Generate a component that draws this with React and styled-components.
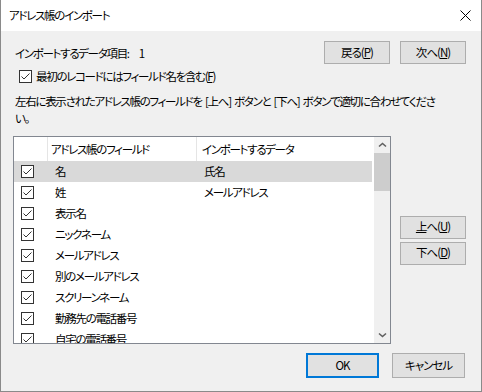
import React from "react";
import styled, { createGlobalStyle } from "styled-components";

const Global = createGlobalStyle`
  html, body { margin: 0; padding: 0; background: #ffffff; }
  body {
    font-family: "Noto Sans CJK JP", "Noto Sans", sans-serif;
    font-size: 11.5px;
    color: #000;
  }
  * { box-sizing: border-box; }
`;

const Window = styled.div`
  width: 482px;
  height: 392px;
  display: flex;
  flex-direction: column;
  border: 1px solid #8a8a8a;
  border-top: none;
  font-feature-settings: "palt";
  letter-spacing: -1.3px;
  overflow: hidden;
`;

const TitleBar = styled.div`
  height: 31px;
  flex-shrink: 0;
  background: #ffffff;
  display: flex;
  align-items: center;
  justify-content: space-between;
  padding: 0 10px 0 8px;
  line-height: 1;
`;

const Title = styled.span`
  font-size: 11.5px;
`;

const Body = styled.div`
  flex: 1;
  background: #f0f0f0;
  display: flex;
  flex-direction: column;
  padding: 10px 15px 0 12px;
`;

const TopRow = styled.div`
  display: flex;
  align-items: center;
  height: 23px;
  flex-shrink: 0;
`;

const Label = styled.span`
  margin-left: 2px;
  white-space: nowrap;
`;

const Count = styled.span`
  margin-left: 10px;
`;

const ButtonGroup = styled.div`
  margin-left: auto;
  display: flex;
  gap: 10px;
`;

const Button = styled.button`
  width: ${(p) => p.$w || 66}px;
  height: ${(p) => p.$h || 23}px;
  flex-shrink: 0;
  padding: 0;
  margin: 0;
  font: inherit;
  font-size: 11.5px;
  letter-spacing: -1px;
  color: #000;
  background: #e1e1e1;
  border: ${(p) => (p.$default ? "2px solid #0078d7" : "1px solid #adadad")};
  display: flex;
  align-items: center;
  justify-content: center;
  line-height: 1;
  u { text-underline-offset: 1px; }
`;

const CheckRow = styled.label`
  display: flex;
  align-items: center;
  gap: 4px;
  height: 13px;
  flex-shrink: 0;
  margin: 6px 0 0 6px;
  white-space: nowrap;
  line-height: 1;
`;

const Box = styled.span`
  width: 13px;
  height: 13px;
  flex-shrink: 0;
  border: 1px solid #333333;
  background: #ffffff;
  display: flex;
  align-items: center;
  justify-content: center;
`;

const Instruction = styled.p`
  margin: 10px 0 0 2px;
  line-height: 17px;
  white-space: nowrap;
  word-spacing: 2px;
  flex-shrink: 0;
`;

const Main = styled.div`
  display: flex;
  align-items: center;
  gap: 9px;
  margin-top: 9px;
  flex-shrink: 0;
`;

const List = styled.div`
  width: 378px;
  height: 208px;
  border: 1px solid #828790;
  background: #ffffff;
  display: flex;
  gap: 2px;
  flex-shrink: 0;
`;

const TableArea = styled.div`
  width: 358px;
  overflow: hidden;
  display: flex;
  flex-direction: column;
`;

const HeaderRow = styled.div`
  display: flex;
  height: 24px;
  flex-shrink: 0;
`;

const HeaderCell = styled.div`
  width: ${(p) => (p.$w ? `${p.$w}px` : "auto")};
  flex: ${(p) => (p.$w ? "0 0 auto" : "1")};
  border-right: ${(p) => (p.$last ? "none" : "1px solid #e5e5e5")};
  padding-left: ${(p) => p.$pad || 0}px;
  line-height: 24px;
  white-space: nowrap;
`;

const Row = styled.div`
  display: flex;
  align-items: center;
  height: 21px;
  flex-shrink: 0;
  background: ${(p) => (p.$selected ? "#d9d9d9" : "transparent")};
`;

const Cell = styled.div`
  width: ${(p) => (p.$w ? `${p.$w}px` : "auto")};
  flex: ${(p) => (p.$w ? "0 0 auto" : "1")};
  padding-left: 7px;
  display: flex;
  align-items: center;
  white-space: nowrap;
  line-height: 1;
`;

const Scrollbar = styled.div`
  width: 16px;
  background: #f0f0f0;
  display: flex;
  flex-direction: column;
`;

const ArrowBtn = styled.div`
  height: 16px;
  display: flex;
  align-items: center;
  justify-content: center;
  flex-shrink: 0;
`;

const Thumb = styled.div`
  height: 38px;
  background: #cdcdcd;
  flex-shrink: 0;
`;

const Track = styled.div`
  flex: 1;
`;

const SideButtons = styled.div`
  display: flex;
  flex-direction: column;
  gap: 3px;
`;

const Footer = styled.div`
  display: flex;
  justify-content: flex-end;
  gap: 13px;
  margin: 9px 1px 0 0;
  flex-shrink: 0;
`;

const Check = () => (
  <svg width="11" height="11" viewBox="0 0 11 11">
    <polyline points="1.5,5.5 4,8 9.5,2.5" fill="none" stroke="#333" strokeWidth="1" />
  </svg>
);

const CheckBox = () => (
  <Box>
    <Check />
  </Box>
);

const Chevron = ({ down }) => (
  <svg width="9" height="6" viewBox="0 0 9 6">
    <polyline
      points={down ? "1,1.5 4.5,4.5 8,1.5" : "1,4.5 4.5,1.5 8,4.5"}
      fill="none"
      stroke="#606060"
      strokeWidth="1.6"
    />
  </svg>
);

const CloseIcon = () => (
  <svg width="11" height="11" viewBox="0 0 11 11">
    <path d="M0.5 0.5 L10.5 10.5 M10.5 0.5 L0.5 10.5" stroke="#000" strokeWidth="1" />
  </svg>
);

const rows = [
  { name: "名", data: "氏名", selected: true },
  { name: "姓", data: "メールアドレス" },
  { name: "表示名" },
  { name: "ニックネーム" },
  { name: "メールアドレス" },
  { name: "別のメールアドレス" },
  { name: "スクリーンネーム" },
  { name: "勤務先の電話番号" },
  { name: "自宅の電話番号" },
];

export default function App() {
  return (
    <>
      <Global />
      <Window>
        <TitleBar>
          <Title>アドレス帳のインポート</Title>
          <CloseIcon />
        </TitleBar>
        <Body>
          <TopRow>
            <Label>
              インポートするデータ項目:<Count>1</Count>
            </Label>
            <ButtonGroup>
              <Button>
                戻る(<u>P</u>)
              </Button>
              <Button>
                次へ(<u>N</u>)
              </Button>
            </ButtonGroup>
          </TopRow>
          <CheckRow>
            <CheckBox />
            <span>
              最初のレコードにはフィールド名を含む(<u>F</u>)
            </span>
          </CheckRow>
          <Instruction>
            左右に表示されたアドレス帳のフィールドを [上へ] ボタンと [下へ] ボタンで適切に合わせてくださ
            <br />
            い。
          </Instruction>
          <Main>
            <List>
              <TableArea>
                <HeaderRow>
                  <HeaderCell $w={34} />
                  <HeaderCell $w={149} $pad={3}>
                    アドレス帳のフィールド
                  </HeaderCell>
                  <HeaderCell $pad={5} $last>
                    インポートするデータ
                  </HeaderCell>
                </HeaderRow>
                {rows.map((r) => (
                  <Row key={r.name} $selected={r.selected}>
                    <Cell $w={34}>
                      <CheckBox />
                    </Cell>
                    <Cell $w={149}>{r.name}</Cell>
                    <Cell>{r.data || ""}</Cell>
                  </Row>
                ))}
              </TableArea>
              <Scrollbar>
                <ArrowBtn>
                  <Chevron />
                </ArrowBtn>
                <Thumb />
                <Track />
                <ArrowBtn>
                  <Chevron down />
                </ArrowBtn>
              </Scrollbar>
            </List>
            <SideButtons>
              <Button>
                <u>上</u>へ(<u>U</u>)
              </Button>
              <Button>
                下へ(<u>D</u>)
              </Button>
            </SideButtons>
          </Main>
          <Footer>
            <Button $w={73} $h={25} $default>
              OK
            </Button>
            <Button $w={73} $h={25}>
              キャンセル
            </Button>
          </Footer>
        </Body>
      </Window>
    </>
  );
}
